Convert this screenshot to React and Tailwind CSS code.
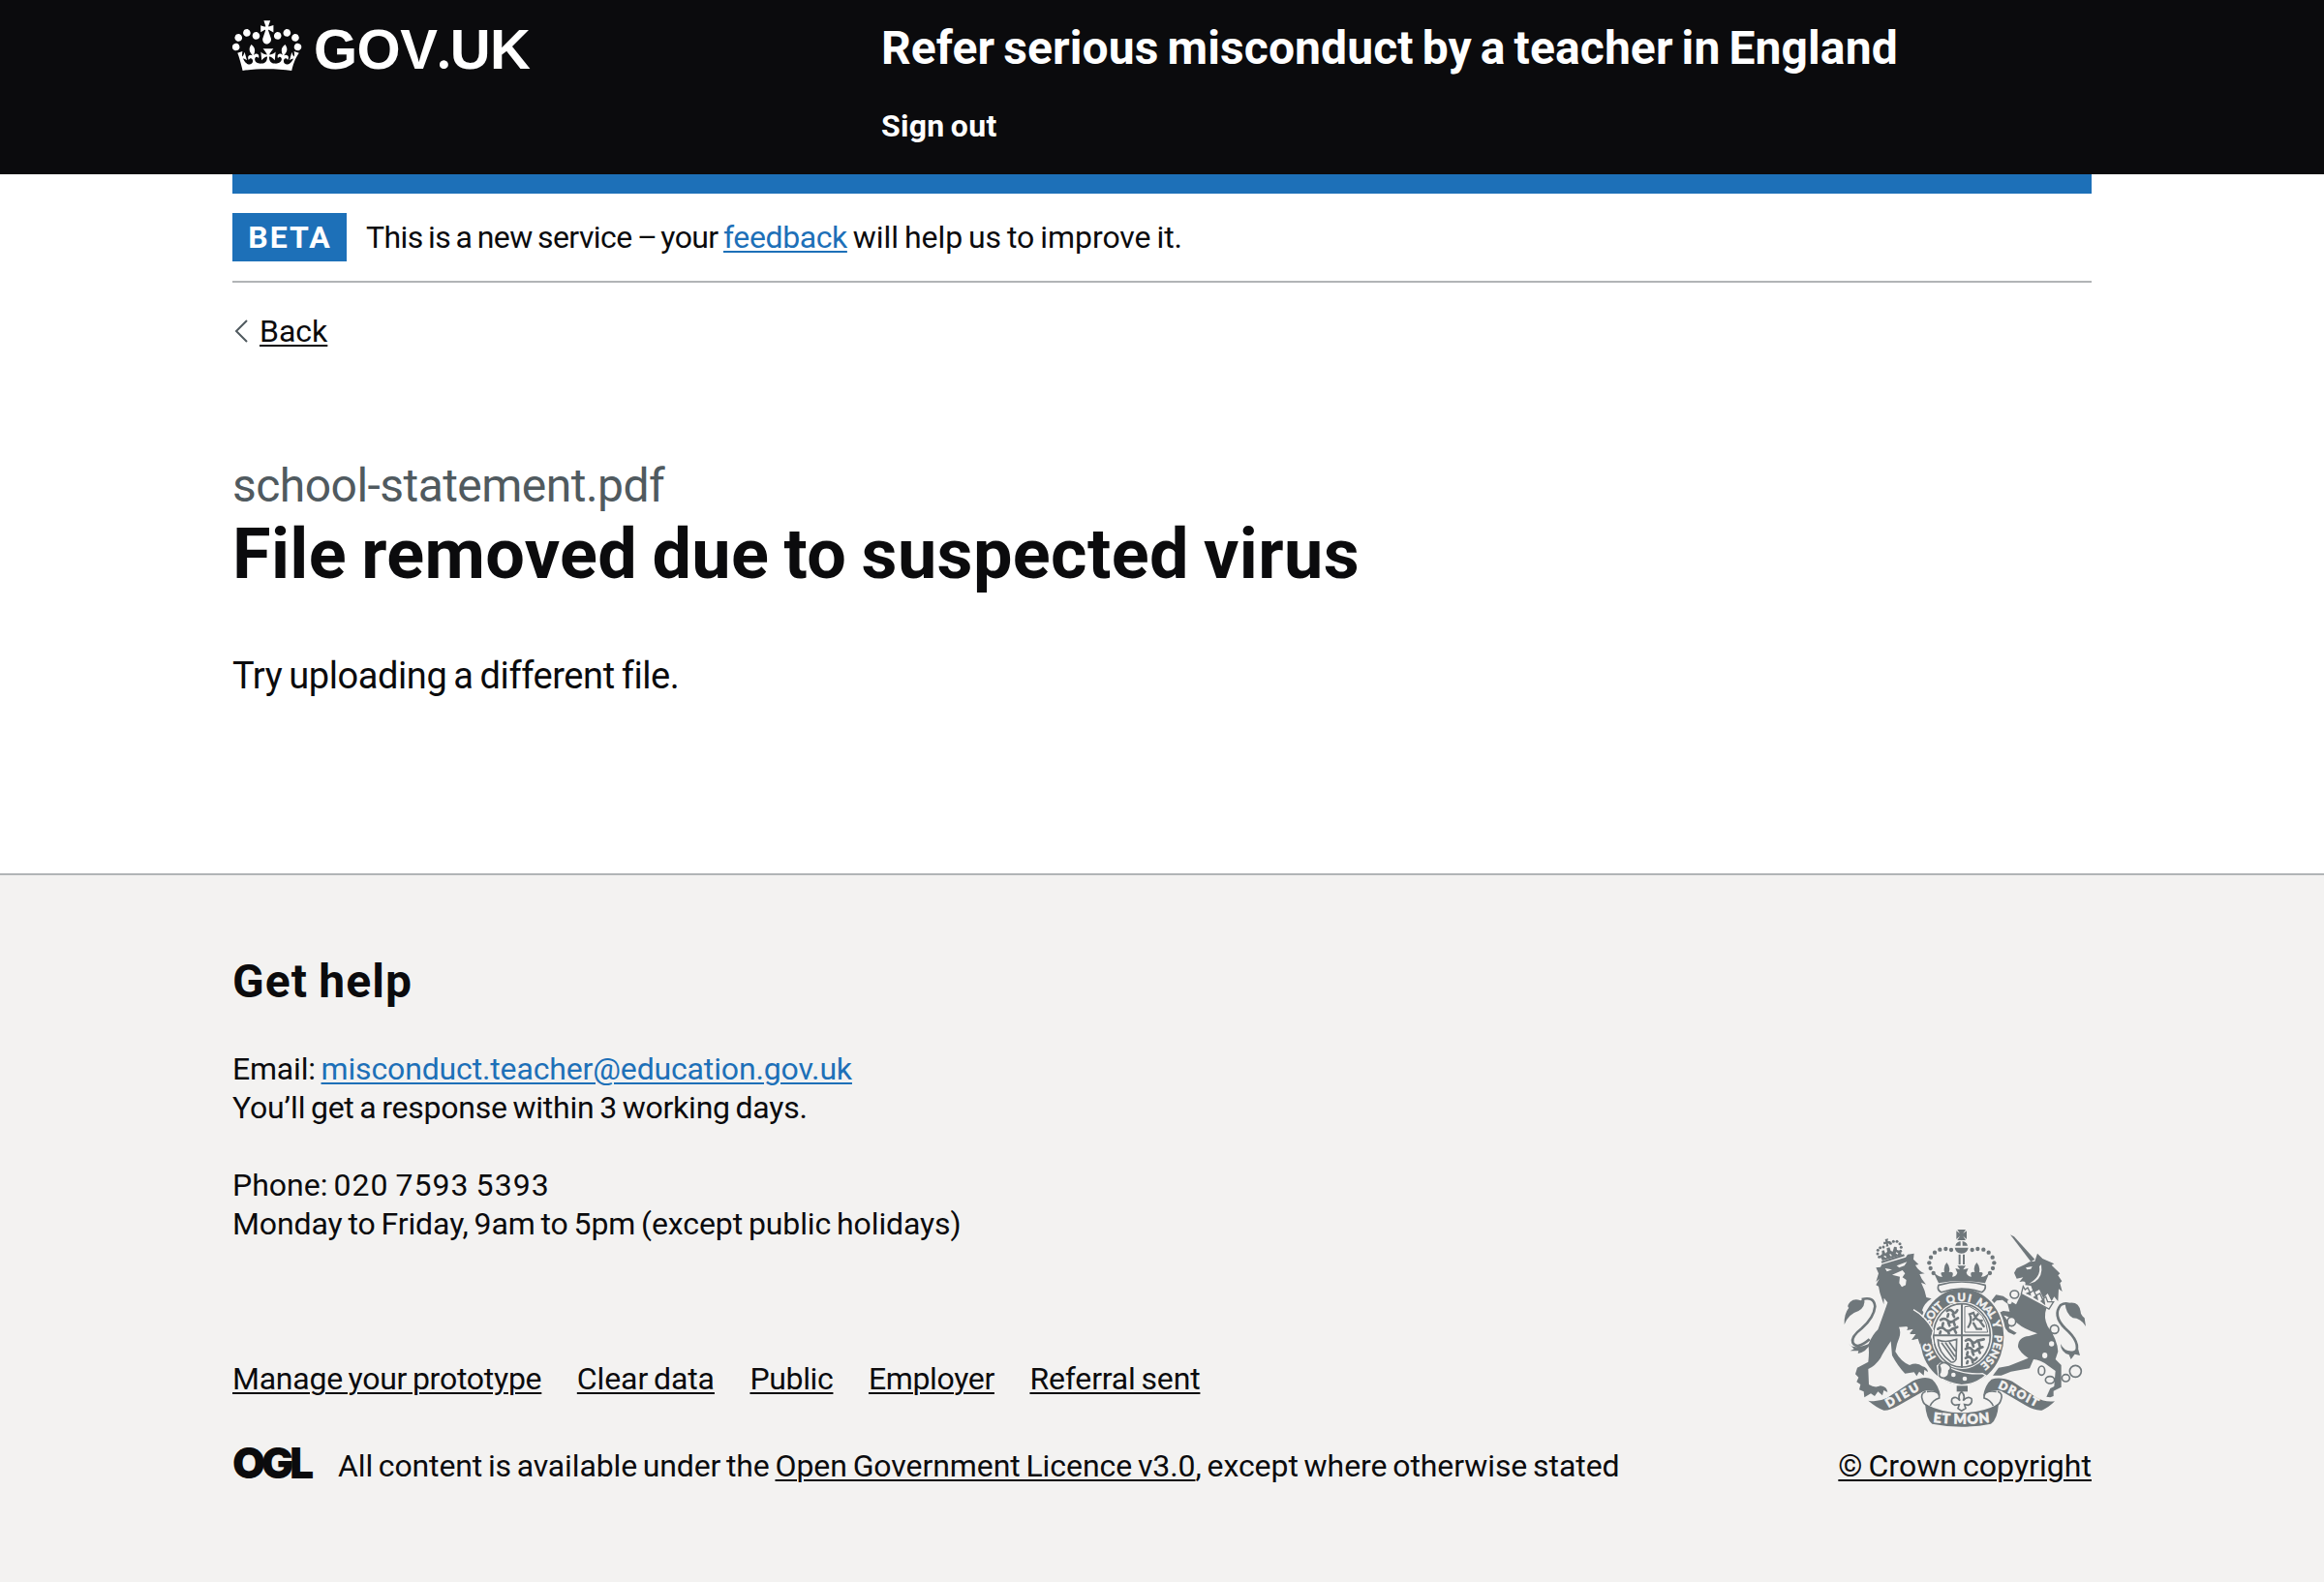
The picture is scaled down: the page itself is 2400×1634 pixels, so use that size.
function Crown() {
  return (
    <svg viewBox="0 0 36 30" className="mt-[13px] h-[60px] w-[72px] fill-white" aria-hidden="true">
      <path d="M6.7 12.2c1 .4 2.1-.1 2.5-1s-.1-2.1-1-2.5c-1-.4-2.1.1-2.5 1-.4 1 0 2.1 1 2.5m-4.3 2.5c1 .4 2.1-.1 2.5-1s-.1-2.1-1-2.5c-1-.4-2.1.1-2.5 1-.5 1 0 2.1 1 2.5m-1.3 4.8c1 .4 2.1-.1 2.5-1s-.1-2.1-1-2.5c-1-.4-2.1.1-2.5 1-.4 1 0 2.1 1 2.5m10.4-5.8c1 .4 2.1-.1 2.5-1s-.1-2.1-1-2.5c-1-.4-2.1.1-2.5 1s0 2.1 1 2.5m17.4-1.5c-1 .4-2.1-.1-2.5-1s.1-2.1 1-2.5c1-.4 2.1.1 2.5 1 .5 1 0 2.1-1 2.5m4.3 2.5c-1 .4-2.1-.1-2.5-1s.1-2.1 1-2.5c1-.4 2.1.1 2.5 1 .5 1 0 2.1-1 2.5m1.3 4.8c-1 .4-2.1-.1-2.5-1s.1-2.1 1-2.5c1-.4 2.1.1 2.5 1 .4 1 0 2.1-1 2.5m-10.4-5.8c-1 .4-2.1-.1-2.5-1s.1-2.1 1-2.5c1-.4 2.1.1 2.5 1s0 2.1-1 2.5m-5.3-4.8 2.4 1.3V6.5l-2.4.8c-.1-.1-.1-.2-.2-.2s1-3 1-3h-3.4l1 3c-.1.1-.2.1-.2.2-.1.1-2.4-.7-2.4-.7v3.5L17 8.8c-.1.1 0 .2.1.3l-1.4 4.2c-.1.2-.1.4-.1.7 0 1.1.8 2.1 1.9 2.2h.6C19.2 16 20 15.1 20 14c0-.2 0-.4-.1-.7l-1.4-4.2c.2-.1.3-.2.3-.3m-1 20.3c4.6 0 8.9.3 12.8.9 1.1-4.6 2.4-7.2 3.8-9.1l-2.6-.9c.3 1.3.3 1.9 0 2.8-.4-.4-.8-1.2-1.1-2.4l-1.2 4.2c.8-.5 1.4-.9 2-.9-1.2 2.6-2.6 3.1-3.5 3-1.2-.2-1.7-1.2-1.5-2.1.3-1.2 1.5-1.5 2.1-.1 1.2-2.4-.8-3.1-2-2.4 1.9-1.9 2.1-3.6.6-5.6-2.1 1.6-2.2 3.2-1.2 5.5-1.3-1.5-3.3-.7-2.5 1.6.9-1.4 2.1-.5 1.9.8-.2 1.2-1.7 2.1-3.5 1.9-2.7-.2-2.9-2.1-2.9-3.6.7-.1 1.9.5 2.9 1.9l.4-4.3c-1.1 1.2-2.1 1.4-3.2 1.4.4-1.2 2.1-3.1 2.1-3.1h-5.4s1.7 1.9 2.1 3.1c-1.1 0-2.1-.2-3.2-1.4l.4 4.3c1-1.4 2.2-2 2.9-1.9-.1 1.5-.2 3.4-2.9 3.6-1.9.2-3.4-.7-3.5-1.9-.2-1.3 1-2.2 1.9-.8.7-2.3-1.2-3-2.5-1.6.9-2.2.9-3.9-1.2-5.5-1.5 2-1.3 3.7.6 5.6-1.2-.7-3.1 0-2 2.4.6-1.4 1.8-1.1 2.1.1.2.9-.3 1.9-1.5 2.1-.9.2-2.4-.5-3.5-3 .6 0 1.2.3 2 .9l-1.2-4.2c-.3 1.1-.7 1.9-1.1 2.4-.3-.8-.2-1.4 0-2.8l-2.6.9C2.9 21 4.2 25.4 5.3 30c3.6-.6 8-.9 12.5-.9" />
    </svg>
  );
}

const LEFT_BEADS = [[405, 123], [388, 120], [370, 122], [354, 131], [342, 146], [337, 163], [341, 180], [350, 195]];
const LION_BEADS = [[182, 145], [177, 135], [178, 124], [185, 116], [195, 114], [248, 127], [250, 115], [246, 104], [237, 97], [226, 97], [217, 103]];

function CoatOfArms() {
  return (
    <svg viewBox="72 57 750 618" className="h-[206px] w-[250px] fill-[#6f777b]" aria-hidden="true">
      <defs>
        <path id="garter" d="M438 497 A101 109 0 0 1 337 388 A101 106 0 0 1 539 388 A101 109 0 0 1 438 497" />
        <path id="ribbon-left" d="M211 612 Q262 582 322 548" />
        <path id="ribbon-mid" d="M345 656 Q437 668 530 656" />
        <path id="ribbon-right" d="M549 551 Q606 576 672 612" />
      </defs>

      {/* Lion */}
      <g>
        {LION_BEADS.map(([x, y]) => (
          <circle key={`${x}-${y}`} cx={x} cy={y} r="4.5" />
        ))}
        <path d="M200 90 L210 88 L208 96 L217 96 L218 105 L209 103 L211 112 L203 113 L204 104 L196 106 L195 98 L202 98Z" />
        <path d="M184 142 L191 136 L190 126 L197 124 L201 134 L207 128 L205 118 L214 115 L218 126 L224 128 L228 113 L236 114 L237 123 L247 126 L252 139 L192 156Z" />
        <path d="M197 142 L204 146 M215 136 L220 142 M234 131 L240 136" className="stroke-[#f3f2f1]" strokeWidth="4" />
        <path d="M188 158 L258 136 L261 142 L190 164Z" />
        <path
          fillRule="evenodd"
          d="M172 178 L186 176 L190 168 L264 146 L270 137 L290 134 L288 152 L304 168 L294 170 Q304 188 323 196 L307 198 Q312 214 327 230 L312 224 Q324 248 328 270 L344 274 Q322 288 315 310 Q330 330 350 378 L342 392 L347 412 L336 408 L330 418 L316 402 L308 416 L302 396 L282 402 L296 384 L276 382 L288 368 L268 372 L272 360 L243 362 Q250 376 244 395 Q236 412 232 438 Q250 470 276 480 Q300 470 316 484 Q332 488 333 502 L322 494 L320 512 L306 500 L298 514 L290 502 L262 506 Q240 484 222 450 L218 406 Q196 438 186 458 Q170 482 148 492 L150 540 Q168 552 186 544 Q206 546 208 564 L196 558 L192 574 L178 562 L168 576 L156 568 L136 580 L134 562 L120 556 L124 540 L112 532 L118 518 L108 508 L114 488 L148 470 Q152 436 148 416 Q162 384 178 370 Q200 310 208 286 L197 272 L196 292 L184 256 L180 236 L172 232 L182 212 L172 222 L180 196 Z
          M200 180 L222 184 L206 190Z M236 172 L268 160 L260 172 L244 178Z M222 200 L254 186 L262 196 L254 208 L266 216 L264 232 L252 238 L244 226 L246 206Z"
        />
        <path d="M128 276 Q166 266 169 298 Q166 332 128 366 Q94 392 100 410 Q112 434 152 400" fill="none" className="stroke-[#6f777b]" strokeWidth="8" />
        <path d="M74 354 Q72 322 88 302 Q80 298 92 284 Q106 272 124 280 L136 274 Q140 300 118 312 Q86 322 74 354Z M88 414 Q102 434 156 412 Q142 440 116 444 L118 436 L92 436 L104 430Z" />
      </g>

      {/* Unicorn */}
      <g>
        <path d="M588 76 L600 82 L664 152 L652 160Z" />
        <path
          fillRule="evenodd"
          d="M600 194 L608 180 L634 168 L648 160 L664 158 L672 134 L688 150 L724 166 L716 170 L742 196 L736 202 L748 220 L742 226 L749 252 L738 244 L736 282 L724 268 L716 282 L704 258 L690 272 L678 246 L660 256 L652 234 L634 232 Q640 216 616 222 L628 208 L608 212Z
          M636 178 L656 174 L652 182 L640 184Z M684 168 Q690 206 664 222 L646 228 Q684 206 678 174Z"
        />
        <path d="M624 254 L700 304 Q690 332 704 360 Q734 400 736 438 L728 462 L746 480 L746 548 L722 560 L722 576 L712 580 L700 578 L712 552 L724 546 L728 498 L706 482 Q680 462 660 462 L648 490 L590 500 L560 512 L534 512 L552 488 L584 482 L644 458 Q620 444 612 424 Q612 392 646 390 L672 382 Q630 368 612 352 L594 338 Q576 326 568 326 L586 350 L584 366 L608 380 L600 386 L582 378 L562 352 L548 320 L566 312 L586 314 L580 290 L564 278 L546 280 L534 292 L530 280 L544 262 L566 266 L586 280 L606 292Z" />
        <path d="M628 236 L634 246 L642 240 L650 256 L660 248 L668 264 L680 258 L688 276 L698 268 L704 284 L722 284 L708 306 L622 260Z" className="fill-[#f3f2f1] stroke-[#6f777b]" strokeWidth="4" />
        <path d="M640 258 L650 262 L648 254Z M662 270 L672 276 L670 264Z M684 282 L694 290 L692 276Z" className="stroke-[#6f777b]" strokeWidth="4" />
        <path d="M792 320 Q772 276 744 294 Q718 326 758 366 Q808 410 790 442" fill="none" className="stroke-[#6f777b]" strokeWidth="8" />
        <path d="M758 290 Q800 276 806 314 Q806 324 818 334 L822 360 Q806 334 782 334 Q760 320 758 290Z M744 414 Q756 440 784 436 L798 428 L804 450 L788 446 L776 462 L770 448 Q744 440 744 414Z" />
        <g fill="none" className="stroke-[#6f777b]" strokeWidth="5">
          <ellipse cx="601" cy="261" rx="13" ry="12" />
          <ellipse cx="592" cy="345" rx="13" ry="14" className="fill-[#f3f2f1]" />
          <circle cx="725" cy="369" r="13" className="fill-[#f3f2f1]" />
          <ellipse cx="685" cy="497" rx="10" ry="14" className="fill-[#f3f2f1]" />
          <ellipse cx="711" cy="526" rx="14" ry="11" className="fill-[#f3f2f1]" />
          <ellipse cx="760" cy="520" rx="12" ry="11" />
          <circle cx="790" cy="499" r="18" />
        </g>
        <g className="fill-[#f3f2f1]">
          <circle cx="716" cy="414" r="8" />
          <ellipse cx="695" cy="450" rx="8" ry="9" />
          <circle cx="586" cy="284" r="7" />
        </g>
      </g>

      {/* Garter and quartered shield */}
      <g>
        <ellipse cx="438" cy="392" rx="136" ry="155" className="fill-[#f3f2f1]" />
        <ellipse cx="438" cy="392" rx="130" ry="149" />
        <ellipse cx="438" cy="388" rx="95" ry="104" className="fill-[#f3f2f1]" />
        <ellipse cx="438" cy="388" rx="88" ry="98" fill="none" className="stroke-[#6f777b]" strokeWidth="5" />
        <path d="M435 288 H441 V488 H435Z M350 385 H527 V391 H350Z" />
        <g fill="none" className="stroke-[#6f777b]" strokeWidth="5" strokeLinecap="round">
          <path d="M392 312 q10 -8 18 2 t14 -4 M396 322 l-2 8 M410 322 l4 8 M372 340 q12 -8 22 2 t22 -2 l10 -6 M380 350 l-2 8 M396 348 l4 10 M412 344 l4 12 M364 368 q12 -8 22 2 t22 -2 l16 -6 M372 376 l-2 6 M394 374 l4 8 M416 372 l4 8" strokeWidth="8" />
          <path d="M450 404 q10 -8 18 2 t18 -2 l20 -4 M456 414 l-2 8 M470 412 l4 10 M490 408 l4 14 M450 430 q12 -8 20 2 t18 -2 l14 -6 M456 440 l-2 8 M470 438 l4 10 M490 434 l4 8 M450 458 q10 -8 18 2 t16 -2 M456 468 l-2 6 M470 464 l2 8" strokeWidth="8" />
          <path d="M447 300 V378 H518 Q514 320 462 298Z" strokeWidth="3" />
          <path d="M458 362 Q472 342 462 322 L474 318 Q482 344 500 342 M474 340 L488 322 M474 350 L484 368 L498 368 M494 344 L506 360" strokeWidth="7" />
          <path d="M364 402 Q388 412 422 400 L420 462 Q414 474 404 470 Q364 440 364 402Z M376 412 L412 462 M388 412 L416 452 M400 410 L418 436" strokeWidth="5" />
        </g>
        <g className="fill-[#f3f2f1] stroke-[#f3f2f1] font-['Lato'] font-black" strokeWidth="1.2" fontSize="34">
          <text><textPath href="#garter" startOffset="92" textLength="52">HO</textPath></text>
          <text><textPath href="#garter" startOffset="194" textLength="74">SOIT</textPath></text>
          <text><textPath href="#garter" startOffset="282" textLength="72">QUI</textPath></text>
          <text><textPath href="#garter" startOffset="370" textLength="68">MAL</textPath></text>
          <text><textPath href="#garter" startOffset="446">Y</textPath></text>
          <text><textPath href="#garter" startOffset="488" textLength="106">PENSE</textPath></text>
        </g>
        <path d="M362 482 L372 474 Q437 512 502 506 L512 512 Q480 540 437 542 Q396 536 366 516Z" className="stroke-[#f3f2f1]" strokeWidth="4" />
        <path d="M368 480 Q382 466 396 478 Q410 488 398 498 Q400 516 384 520 Q366 520 368 506 Q376 498 368 480Z" className="fill-[#f3f2f1] stroke-[#6f777b]" strokeWidth="5" />
        <circle cx="412" cy="510" r="7" className="fill-[#f3f2f1]" />
        <circle cx="447" cy="522" r="7" className="fill-[#f3f2f1]" />
      </g>

      {/* Imperial crown */}
      <g>
        <path d="M424 60 L450 60 L442 72 L453 64 L453 90 L442 80 L450 93 L424 93 L432 80 L421 90 L421 64 L432 72Z" />
        <path fillRule="evenodd" d="M418 110 Q422 96 437 96 Q452 96 456 110Z M434 96 L440 96 L440 110 L434 110Z" />
        <path d="M416 116 L458 116 Q456 132 437 134 Q418 132 416 116Z M428 137 L434 137 L434 168 L428 168Z M441 137 L447 137 L447 168 L441 168Z" />
        {LEFT_BEADS.map(([x, y]) => (
          <g key={x}>
            <circle cx={x} cy={y} r="6.5" />
            <circle cx={875 - x} cy={y} r="6.5" />
          </g>
        ))}
        <path d="M350 192 Q366 208 378 206 Q366 190 384 192 Q380 174 391 162 Q404 176 398 192 Q416 188 408 206 Q420 206 424 194 L418 180 L432 184 L424 172 L450 172 L442 184 L458 180 L452 194 Q456 206 468 206 Q460 188 478 192 Q472 176 484 162 Q496 174 492 192 Q510 190 498 206 Q510 208 524 192 L510 226 Q437 212 366 226Z" />
        <path d="M366 232 Q437 212 510 232 Q514 246 500 254 Q437 232 374 254 Q360 248 366 232Z" className="fill-[#f3f2f1] stroke-[#6f777b]" strokeWidth="5" />
      </g>

      {/* Lion's foreleg over the garter */}
      <path d="M268 362 L289 312 Q326 332 348 372 L342 392 L347 412 L336 406 L330 418 L316 402 L308 416 L302 398 L284 402 L296 384 L278 384 L288 368Z" />
      <path d="M288 308 Q328 330 350 374 L345 392 L350 414" fill="none" className="stroke-[#f3f2f1]" strokeWidth="4" />

      {/* Motto ribbon */}
      <g>
        <path d="M422 544 H456 V562 H422Z" />
        <path d="M437 562 Q450 574 442 590 Q456 574 468 584 Q472 598 458 604 L446 602 L450 614 L437 622 L426 614 L430 602 L416 604 Q402 598 408 584 Q420 574 432 590 Q424 574 437 562Z" className="fill-[#f3f2f1] stroke-[#6f777b]" strokeWidth="5" />
        <path d="M148 590 Q176 596 206 582 L284 530 Q322 512 346 524 Q366 542 372 576 Q352 550 318 562 L240 606 Q212 622 196 620 Q174 612 148 590Z" />
        <path d="M726 592 Q694 596 668 580 L594 530 Q556 514 530 524 Q510 540 504 576 Q524 552 560 560 L634 604 Q664 622 686 620 Q706 612 726 592Z" />
        <g fill="none" className="stroke-[#6f777b]" strokeWidth="5">
          <path d="M326 562 Q308 568 316 588 Q320 602 332 606 M330 562 Q370 556 368 582 Q348 588 340 606" />
          <path d="M549 562 Q567 568 559 588 Q555 602 543 606 M545 562 Q505 556 507 582 Q527 588 535 606" />
        </g>
        <path d="M324 600 Q376 628 437 628 Q500 628 552 600 Q548 650 528 662 Q437 680 346 662 Q328 648 324 600Z" />
        <g className="fill-[#f3f2f1] stroke-[#f3f2f1] font-['Lato'] font-black" strokeWidth="2" fontSize="42">
          <text fontSize="37"><textPath href="#ribbon-left" textLength="112">DIEU</textPath></text>
          <text><textPath href="#ribbon-mid" startOffset="4" textLength="176">ET MON</textPath></text>
          <text fontSize="36"><textPath href="#ribbon-right" textLength="132">DROIT</textPath></text>
        </g>
      </g>
    </svg>
  );
}

const FOOTER_LINKS = [
  ["Manage your prototype", "tracking-[-0.25px]"],
  ["Clear data", "tracking-[-0.1px]"],
  ["Public", "tracking-[-0.35px]"],
  ["Employer", "tracking-[-0.35px]"],
  ["Referral sent", "tracking-[-0.17px]"],
];

const LINK = "underline decoration-2 underline-offset-[3px]";

export default function App() {
  return (
    <div className="flex h-[1634px] w-[2400px] flex-col bg-white font-['Roboto',sans-serif] text-[32px] leading-[40px] text-[#0b0b0d] [word-spacing:-2px]">
      <header className="flex h-[180px] bg-[#0b0b0d] px-[240px] font-bold text-white">
        <a className="flex w-[670px] items-start">
          <Crown />
          <span className="mt-[20px] ml-[12px] font-['Liberation_Sans'] text-[58px] leading-[58px] tracking-[-0.5px]">
            GOV<span className="font-['Lato']">.</span>UK
          </span>
        </a>
        <div>
          <div className="pt-[26px] text-[48px] leading-[48px] tracking-[0.1px] [word-spacing:-3px]">
            Refer serious misconduct by a teacher in England
          </div>
          <div className="mt-[36px] tracking-[0.3px]">Sign out</div>
        </div>
      </header>

      <main className="mx-[240px] h-[722px]">
        <div className="h-[20px] bg-[#1d70b8]" />
        <div className="flex items-center border-b-2 border-[#b1b4b6] py-[20px]">
          <strong className="flex h-[50px] w-[118px] items-center justify-center bg-[#1d70b8] pl-[1px] font-bold tracking-[2px] text-white">
            BETA
          </strong>
          <p className="ml-[20px] whitespace-pre">
            <span className="tracking-[-0.58px]">
              This is a new service <span className="tracking-[-2px]">–</span> your{" "}
            </span>
            <a className={`text-[#1d70b8] tracking-[-0.4px] ${LINK}`}>feedback</a>
            <span className="tracking-[-0.04px]"> will help us to improve it.</span>
          </p>
        </div>
        <a className="mt-[30px] flex items-center">
          <svg viewBox="0 0 14 24" className="mr-[12px] ml-[2px] h-[24px] w-[14px] fill-none stroke-[#505a5f]" strokeWidth="2">
            <path d="M13 1 L2 12 L13 23" />
          </svg>
          <span className={LINK}>Back</span>
        </a>
        <div className="mt-[110px] text-[48px] leading-[60px] tracking-[-0.54px] text-[#505a5f]">school-statement.pdf</div>
        <h1 className="mt-px text-[72px] leading-[80px] font-bold tracking-[0.36px] [word-spacing:-3px]">
          File removed due to suspected virus
        </h1>
        <p className="mt-[60px] text-[38px] leading-[50px] tracking-[-0.42px]">Try uploading a different file.</p>
      </main>

      <footer className="flex-1 border-t-2 border-[#b1b4b6] bg-[#f3f2f1] px-[240px] pt-[80px]">
        <h2 className="text-[48px] leading-[60px] font-bold tracking-[1.1px]">Get help</h2>
        <div className="flex h-[490px] items-end justify-between pt-[40px]">
          <div className="self-start">
            <p className="whitespace-pre">
              <span className="tracking-[-0.2px]">Email: </span>
              <a className={`text-[#1d70b8] tracking-[-0.15px] ${LINK}`}>misconduct.teacher@education.gov.uk</a>
            </p>
            <p className="tracking-[-0.23px]">You’ll get a response within 3 working days.</p>
            <p className="mt-[40px] whitespace-pre">
              Phone: <span className="tracking-[1.05px]">020 7593 5393</span>
            </p>
            <p className="tracking-[-0.1px]">Monday to Friday, 9am to 5pm (except public holidays)</p>
            <ul className="mt-[120px] flex gap-[36.5px]">
              {FOOTER_LINKS.map(([label, tracking]) => (
                <li key={label} className={tracking}>
                  <a className={LINK}>{label}</a>
                </li>
              ))}
            </ul>
            <div className="mt-[50px] flex">
              <span className="w-[109px] font-['Inter'] text-[44px] leading-[34px] font-black tracking-[-4px]">OGL</span>
              <p className="whitespace-pre">
                <span className="tracking-[-0.14px]">All content is available under the </span>
                <a className={`tracking-[-0.08px] ${LINK}`}>Open Government Licence v3.0</a>
                <span className="tracking-[-0.08px]">, except where otherwise stated</span>
              </p>
            </div>
          </div>
          <div className="flex flex-col items-center gap-[19px]">
            <CoatOfArms />
            <a className={`tracking-[0.04px] ${LINK}`}>© Crown copyright</a>
          </div>
        </div>
      </footer>
    </div>
  );
}
